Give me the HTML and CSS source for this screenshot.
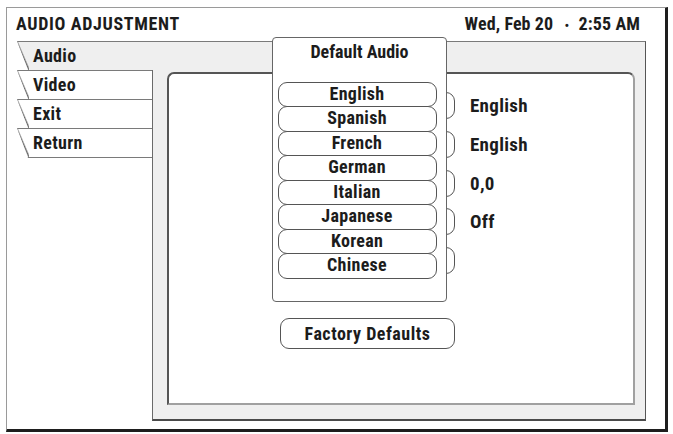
FILE: index.html
```html
<!DOCTYPE html>
<html lang="en">

<head>
  <meta charset="UTF-8" />
  <meta name="viewport" content="width=device-width, initial-scale=1.0" />
  <title>Audio Adjustment</title>
  <link rel="stylesheet" href="styles.css">
</head>

<body>
  <div class="screen">
    <!-- Title bar -->
    <header class="topbar">
      <span class="title">AUDIO ADJUSTMENT</span>
      <span class="clock">Wed, Feb 20 <span class="dot">&bull;</span> 2:55 AM</span>
    </header>

    <!-- Tabs and settings panel -->
    <div class="workspace">
      <div class="tab active">Audio</div>
      <div class="workspace-body">
        <nav class="tab-list">
          <div class="tab">Video</div>
          <div class="tab">Exit</div>
          <div class="tab last">Return</div>
        </nav>

        <section class="panel">
          <div class="sheet">
            <ul class="settings">
              <li class="setting"><span class="field"></span><span class="value">English</span></li>
              <li class="setting"><span class="field"></span><span class="value">English</span></li>
              <li class="setting"><span class="field"></span><span class="value">0,0</span></li>
              <li class="setting"><span class="field"></span><span class="value">Off</span></li>
              <li class="setting"><span class="field"></span><span class="value"></span></li>
            </ul>
            <button class="field factory">Factory Defaults</button>
          </div>
        </section>
      </div>
    </div>

    <!-- Open language list -->
    <div class="dropdown">
      <div class="dropdown-title">Default Audio</div>
      <ul class="options">
        <li class="option">English</li>
        <li class="option">Spanish</li>
        <li class="option">French</li>
        <li class="option">German</li>
        <li class="option">Italian</li>
        <li class="option">Japanese</li>
        <li class="option">Korean</li>
        <li class="option">Chinese</li>
      </ul>
    </div>
  </div>
</body>

</html>
```

FILE: styles.css
```css
body {
  margin: 0;
  background: #fff;
  color: #1c1c1c;
  font-family: Roboto, 'Liberation Sans', sans-serif;
  font-stretch: 85%;
  font-weight: bold;
  font-size: 18px;
  letter-spacing: 0.3px;
}

.screen {
  position: relative;
  box-sizing: border-box;
  width: 662px;
  height: 425px;
  margin: 7px 0 0 6px;
  border-top: 1px solid #9a9a9a;
  border-left: 1px solid #9a9a9a;
  border-right: 3px solid #1e1e1e;
  border-bottom: 3px solid #1e1e1e;
  background: #fff;
}

.topbar {
  display: flex;
  justify-content: space-between;
  align-items: center;
  box-sizing: border-box;
  height: 33px;
  padding: 0 25px 3px 9px;
}

.title {
  letter-spacing: 0.65px;
}

.clock {
  letter-spacing: 0.1px;
}

.clock .dot {
  margin: 0 5px 0 7px;
  font-size: 13px;
}

.workspace {
  margin: 0 19px 0 10px;
  height: 380px;
  display: flex;
  flex-direction: column;
}

/* slanted tabs */
.tab {
  box-sizing: border-box;
  height: 29px;
  line-height: 27px;
  padding-left: 16px;
  border-top: 1px solid #7a7a7a;
  background:
    linear-gradient(to top right, transparent calc(50% - 1.5px), #6a6a6a 50%, transparent calc(50% + 1.5px)) left top / 12px 100% no-repeat,
    #fff;
  clip-path: polygon(0 0, 100% 0, 100% 100%, 11px 100%, 0 0);
}

.tab.last {
  height: 30px;
  border-bottom: 1px solid #7a7a7a;
}

.tab.active {
  flex: none;
  border-right: 1px solid #555;
  background:
    linear-gradient(to top right, transparent calc(50% - 1.5px), #6a6a6a 50%, transparent calc(50% + 1.5px)) left top / 12px 100% no-repeat,
    #efefef;
}

.workspace-body {
  flex: 1;
  display: flex;
}

.tab-list {
  width: 135px;
  flex: none;
}

.panel {
  flex: 1;
  box-sizing: border-box;
  padding: 2px 10px 14px 14px;
  background: #efefef;
  border-left: 1px solid #6a6a6a;
  border-right: 1px solid #555;
  border-bottom: 2px solid #4a4a4a;
}

.sheet {
  box-sizing: border-box;
  height: 100%;
  padding: 18px 0 0 111px;
  background: #fff;
  border: 2px solid #a0a0a0;
  border-top-color: #555;
  border-left-color: #555;
  border-radius: 7px 7px 0 0;
}

.settings {
  list-style: none;
  margin: 0;
  padding: 0;
  display: flex;
  flex-direction: column;
  gap: 11.75px;
}

.setting {
  display: flex;
  align-items: center;
}

.field {
  display: block;
  box-sizing: border-box;
  width: 175px;
  height: 27px;
  border: 1.5px solid #555;
  border-radius: 9px;
  background: #fff;
}

.value {
  margin-left: 15px;
  font-size: 19px;
}

.factory {
  height: 31px;
  margin-top: 44px;
  padding: 0;
  font: inherit;
  letter-spacing: 0.5px;
  color: inherit;
  text-align: center;
}

/* language list */
.dropdown {
  position: absolute;
  left: 265px;
  top: 29px;
  box-sizing: border-box;
  width: 175px;
  height: 265px;
  border: 1.5px solid #666;
  border-radius: 4px;
  background: #fff;
}

.dropdown-title {
  padding-top: 4px;
  line-height: 20px;
  text-align: center;
  letter-spacing: 0;
}

.options {
  list-style: none;
  margin: 19.5px 0 0 4.5px;
  padding: 0;
  width: 159px;
}

.option {
  box-sizing: border-box;
  height: 25.5px;
  line-height: 22.5px;
  border: 1.5px solid #555;
  border-radius: 9px;
  background: #fff;
  text-align: center;
}

.option + .option {
  margin-top: -1px;
}
```
